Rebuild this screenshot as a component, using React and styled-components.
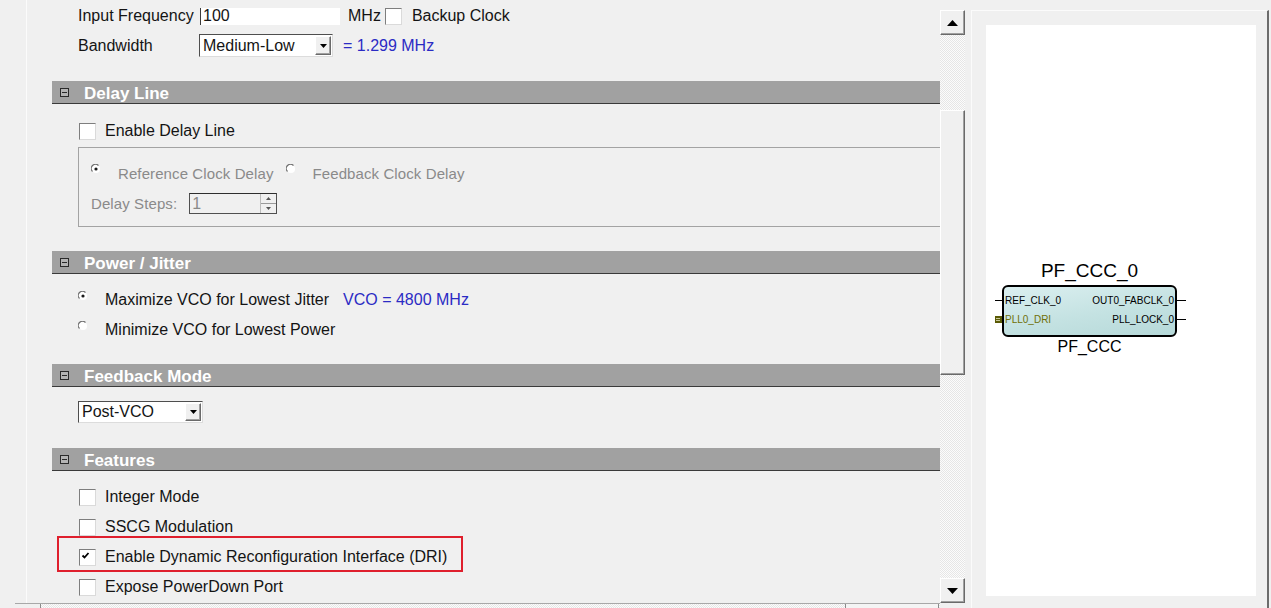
import React from 'react';
import styled, { createGlobalStyle, css } from 'styled-components';

const GlobalStyle = createGlobalStyle`
  html, body {
    margin: 0;
    padding: 0;
    background: #f0f0f0;
  }
  body {
    font-family: "Liberation Sans", Arial, sans-serif;
    font-size: 16px;
    color: #141414;
    overflow: hidden;
  }
`;

const Window = styled.div`
  display: flex;
  width: 1271px;
  height: 608px;
  overflow: hidden;
  background: #f0f0f0;
`;

const LeftPane = styled.div`
  display: grid;
  grid-template-columns: 27px 913px 25px;
  grid-template-rows: 603px 5px;
  flex: none;
`;

const Gutter = styled.div`
  border-right: 1px solid #fbfbfb;
`;

const Viewport = styled.div`
  margin-top: 8px;
  overflow: hidden;
`;

const Content = styled.div`
  margin-top: -4px;
  padding-left: 25px;
`;

const checker = css`
  background-color: #fafafa;
  background-image: repeating-conic-gradient(#e6e6e6 0% 25%, #fcfcfc 0% 50%);
  background-size: 2px 2px;
`;

const raised = css`
  box-sizing: border-box;
  background: #f0f0f0;
  border: 1px solid;
  border-color: #ffffff #6a6a6a #6a6a6a #ffffff;
  box-shadow: inset -1px -1px #a0a0a0;
`;

const VScroll = styled.div`
  display: flex;
  flex-direction: column;
  padding-top: 10px;
`;

const ArrowButton = styled.div`
  ${raised};
  flex: none;
  height: 25px;
  display: flex;
  align-items: center;
  justify-content: center;
`;

const Track = styled.div`
  ${checker};
  flex: 1;
  display: flex;
  flex-direction: column;
`;

const Thumb = styled.div`
  ${raised};
  margin-top: ${p => p.$offset}px;
  height: ${p => p.$size}px;
`;

const HScroll = styled.div`
  grid-column: 1 / 3;
  display: flex;
  margin-left: 15px;
  border-top: 1px solid #a8a8a8;
`;

const HButton = styled.div`
  width: 25px;
  border-right: 1px solid #8a8a8a;
  background: #f0f0f0;
`;

const HTrack = styled.div`
  ${checker};
  flex: 1;
  display: flex;
`;

const HThumb = styled.div`
  margin-left: auto;
  margin-right: 1px;
  width: 92px;
  border-left: 1px solid #8a8a8a;
  border-right: 1px solid #8a8a8a;
  background: #f4f4f4;
`;

const Header = styled.div`
  box-sizing: border-box;
  display: flex;
  align-items: center;
  gap: 15px;
  height: 23px;
  margin-top: ${p => p.$mt || 0}px;
  padding: 3px 0 0 8px;
  background: #a1a1a1;
  border-bottom: 1px solid #3a3a3a;
  color: #ffffff;
  font-weight: bold;
  font-size: 17px;
`;

const Body = styled.div`
  padding-top: ${p => p.$pt || 0}px;
`;

const Row = styled.div`
  position: relative;
  box-sizing: border-box;
  display: flex;
  align-items: center;
  height: ${p => p.$h || 30}px;
  padding-top: 2px;
  margin-left: ${p => (p.$indent ?? 26)}px;
  margin-top: ${p => p.$mt || 0}px;
  color: ${p => (p.$disabled ? '#8a8a8a' : '#141414')};
  white-space: nowrap;
  ${p => p.$disabled && css`
    font-size: 15px;
    letter-spacing: 0.1px;
  `}
  ${p => p.$highlight && css`
    &::after {
      content: '';
      position: absolute;
      left: -21px;
      top: -5px;
      width: 406px;
      height: 36px;
      box-sizing: border-box;
      border: 2px solid #df1f2d;
    }
  `}
`;

const Label = styled.span`
  flex: none;
  width: ${p => (p.$w ? `${p.$w}px` : 'auto')};
  margin-left: ${p => p.$ml || 0}px;
`;

const Value = styled.span`
  margin-left: ${p => p.$ml || 0}px;
  color: #2b2bc4;
`;

const TextField = styled.div`
  box-sizing: border-box;
  width: 140px;
  height: 17px;
  padding-left: 2px;
  background: #ffffff;
  border-left: 1px solid #3c3c3c;
  display: flex;
  align-items: center;
`;

const Box = styled.span`
  flex: none;
  box-sizing: border-box;
  width: 17px;
  height: 17px;
  margin-left: ${p => p.$ml || 1}px;
  margin-right: ${p => p.$mr || 9}px;
  background: #ffffff;
  border: 1px solid;
  border-color: #7e7e7e #dadada #dadada #7e7e7e;
  display: flex;
`;

const RadioDot = styled.svg`
  flex: none;
  margin-top: -8px;
  margin-left: ${p => p.$ml || 0}px;
  margin-right: 17px;
`;

const SelectBox = styled.div`
  box-sizing: border-box;
  display: flex;
  align-items: center;
  width: ${p => p.$w}px;
  height: ${p => p.$h}px;
  padding-left: 3px;
  background: #ffffff;
  border: 1px solid;
  border-color: #4e4e4e #dcdcdc #dcdcdc #4e4e4e;
`;

const DropButton = styled.span`
  ${raised};
  margin-left: auto;
  margin-right: 1px;
  width: 16px;
  height: calc(100% - 2px);
  display: flex;
  align-items: center;
  justify-content: center;
`;

const Group = styled.div`
  margin-left: 26px;
  margin-top: 2px;
  padding: 9px 0 9px 12px;
  border: 1px solid #a3a3a3;
  border-right: none;
`;

const Spinner = styled.div`
  box-sizing: border-box;
  display: flex;
  width: 88px;
  height: 21px;
  margin-left: 12px;
  background: #f0f0f0;
  border: 1px solid #505050;
  border-top-color: #2e2e2e;
  color: #8a8a8a;
  font-size: 16px;
`;

const SpinText = styled.span`
  flex: 1;
  padding-left: 2px;
  line-height: 19px;
`;

const SpinButtons = styled.div`
  width: 15px;
  display: flex;
  flex-direction: column;
  border-left: 1px solid #bcbcbc;
`;

const SpinHalf = styled.div`
  flex: 1;
  display: flex;
  align-items: center;
  justify-content: center;
  border-top: ${p => (p.$bottom ? '1px solid #9a9a9a' : 'none')};
`;

const RightPane = styled.div`
  box-sizing: border-box;
  display: flex;
  flex: none;
  width: 298px;
  margin-left: 6px;
  margin-top: 10px;
  padding: 14px 11px 0 14px;
  border-top: 1px solid #fbfbfb;
  border-left: 1px solid #fbfbfb;
  border-right: 2px solid #6c6c6c;
`;

const Canvas = styled.div`
  position: relative;
  flex: 1;
  height: 571px;
  background: #ffffff;
`;

const Node = styled.div`
  position: absolute;
  left: 9px;
  top: 235px;
  display: flex;
  flex-direction: column;
  align-items: stretch;
  padding: 0 9px 0 7px;
  color: #000;
`;

const NodeTitle = styled.div`
  text-align: center;
  font-size: 19px;
  line-height: 22px;
  margin-bottom: 3px;
`;

const NodeSub = styled.div`
  text-align: center;
  font-size: 16px;
  line-height: 20px;
`;

const Block = styled.div`
  box-sizing: border-box;
  width: 175px;
  height: 52px;
  padding-top: 4px;
  border: 2px solid #000;
  border-radius: 6px;
  background: linear-gradient(170deg, #dbeff0 0%, #c4e2e2 55%, #b6d9d9 100%);
`;

const Port = styled.div`
  position: relative;
  display: flex;
  justify-content: space-between;
  align-items: center;
  height: 19px;
  padding: 0 1px;
  font-size: 10px;
  white-space: nowrap;
`;

const PortName = styled.span`
  color: ${p => (p.$bus ? '#6f6f06' : '#000')};
`;

const Pin = styled.span`
  position: absolute;
  top: 9px;
  height: 1px;
  background: #000;
  ${p => (p.$side === 'left'
    ? css`left: -9px; width: 7px;`
    : css`right: -11px; width: 9px;`)}
`;

const BusPin = styled.span`
  position: absolute;
  left: -9px;
  top: 6px;
  width: 7px;
  height: 7px;
  background: #5b5b06;
  &::after {
    content: '';
    position: absolute;
    left: 1px;
    top: 2px;
    width: 4px;
    height: 3px;
    border-top: 1px solid #c8c89a;
    border-bottom: 1px solid #c8c89a;
    box-sizing: border-box;
  }
`;

const MinusIcon = () => (
  <svg width="9" height="9" viewBox="0 0 9 9" style={{ marginTop: -3 }}>
    <rect x="0.5" y="0.5" width="8" height="8" fill="#b4b4b4" stroke="#2a2a2a" />
    <line x1="2" y1="4.5" x2="7" y2="4.5" stroke="#2a2a2a" />
  </svg>
);

const Tri = ({ dir = 'down', w = 7, h = 4, color = '#000' }) => (
  <svg width={w} height={h} viewBox={`0 0 ${w} ${h}`}>
    {dir === 'down'
      ? <polygon points={`0,0 ${w},0 ${w / 2},${h}`} fill={color} />
      : <polygon points={`0,${h} ${w},${h} ${w / 2},0`} fill={color} />}
  </svg>
);

const Check = ({ checked, ml, mr }) => (
  <Box $ml={ml} $mr={mr}>
    {checked && (
      <svg width="15" height="15" viewBox="0 0 15 15">
        <path d="M2.5 5.5 L4.5 7.5 L8.5 3" stroke="#000" strokeWidth="1.8" fill="none" />
      </svg>
    )}
  </Box>
);

const Radio = ({ selected, ml }) => (
  <RadioDot width="10" height="10" viewBox="0 0 10 10" $ml={ml}>
    <circle cx="5" cy="5" r="4" fill="#ffffff" />
    <path d="M1.5 7.5 A4 4 0 0 1 7.5 1.5" stroke="#6e6e6e" strokeWidth="1.2" fill="none" />
    {selected && <circle cx="5" cy="5" r="1.6" fill="#1a1a1a" />}
  </RadioDot>
);

const Select = ({ value, w, h }) => (
  <SelectBox $w={w} $h={h}>
    {value}
    <DropButton><Tri /></DropButton>
  </SelectBox>
);

const Section = ({ title, mt, pt, children }) => (
  <>
    <Header $mt={mt}><MinusIcon />{title}</Header>
    <Body $pt={pt}>{children}</Body>
  </>
);

const features = [
  { label: 'Integer Mode' },
  { label: 'SSCG Modulation' },
  { label: 'Enable Dynamic Reconfiguration Interface (DRI)', checked: true, highlight: true },
  { label: 'Expose PowerDown Port' },
];

export default function App() {
  return (
    <>
      <GlobalStyle />
      <Window>
        <LeftPane>
          <Gutter />
          <Viewport>
            <Content>
              <Row $h={22}>
                <Label $w={122}>Input Frequency</Label>
                <TextField>100</TextField>
                <Label $ml={8}>MHz</Label>
                <Check ml={4} mr={10} />
                <Label>Backup Clock</Label>
              </Row>
              <Row $h={25} $mt={6}>
                <Label $w={121}>Bandwidth</Label>
                <Select value="Medium-Low" w={134} h={23} />
                <Value $ml={10}>= 1.299 MHz</Value>
              </Row>

              <Section title="Delay Line" mt={24} pt={11}>
                <Row>
                  <Check />
                  Enable Delay Line
                </Row>
                <Group>
                  <Row $indent={0} $disabled>
                    <Radio selected />
                    Reference Clock Delay
                    <Radio ml={12} />
                    Feedback Clock Delay
                  </Row>
                  <Row $indent={0} $disabled>
                    Delay Steps:
                    <Spinner>
                      <SpinText>1</SpinText>
                      <SpinButtons>
                        <SpinHalf><Tri dir="up" w={5} h={3} color="#555" /></SpinHalf>
                        <SpinHalf $bottom><Tri w={5} h={3} color="#555" /></SpinHalf>
                      </SpinButtons>
                    </Spinner>
                  </Row>
                </Group>
              </Section>

              <Section title="Power / Jitter" mt={24} pt={10}>
                <Row>
                  <Radio selected />
                  Maximize VCO for Lowest Jitter
                  <Value $ml={14}>VCO = 4800 MHz</Value>
                </Row>
                <Row>
                  <Radio />
                  Minimize VCO for Lowest Power
                </Row>
              </Section>

              <Section title="Feedback Mode" mt={20} pt={12}>
                <Row $h={24}>
                  <Select value="Post-VCO" w={125} h={22} />
                </Row>
              </Section>

              <Section title="Features" mt={25} pt={10}>
                {features.map(f => (
                  <Row key={f.label} $highlight={f.highlight}>
                    <Check checked={f.checked} />
                    {f.label}
                  </Row>
                ))}
              </Section>
            </Content>
          </Viewport>
          <VScroll>
            <ArrowButton><Tri dir="up" w={11} h={6} /></ArrowButton>
            <Track>
              <Thumb $offset={75} $size={265} />
            </Track>
            <ArrowButton><Tri w={11} h={6} /></ArrowButton>
          </VScroll>
          <HScroll>
            <HButton />
            <HTrack><HThumb /></HTrack>
          </HScroll>
        </LeftPane>

        <RightPane>
          <Canvas>
            <Node>
              <NodeTitle>PF_CCC_0</NodeTitle>
              <Block>
                <Port>
                  <Pin $side="left" />
                  <PortName>REF_CLK_0</PortName>
                  <PortName>OUT0_FABCLK_0</PortName>
                  <Pin $side="right" />
                </Port>
                <Port>
                  <BusPin />
                  <PortName $bus>PLL0_DRI</PortName>
                  <PortName>PLL_LOCK_0</PortName>
                  <Pin $side="right" />
                </Port>
              </Block>
              <NodeSub>PF_CCC</NodeSub>
            </Node>
          </Canvas>
        </RightPane>
      </Window>
    </>
  );
}
